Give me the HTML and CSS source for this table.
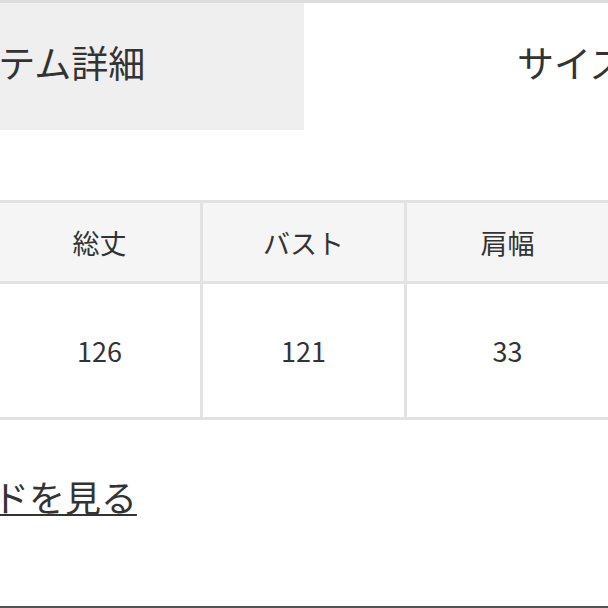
FILE: index.html
```html
<!DOCTYPE html>
<html lang="ja">
<head>
<meta charset="utf-8">
<link rel="stylesheet" href="styles.css">
</head>
<body>
<div class="page">
  <div class="tabs">
    <div class="tab tab-active">アイテム詳細</div>
    <div class="tab">サイズ</div>
  </div>
  <table class="size-table">
    <tr class="head-row">
      <th>サイズ</th>
      <th>総丈</th>
      <th>バスト</th>
      <th>肩幅</th>
    </tr>
    <tr class="body-row">
      <td>F</td>
      <td>126</td>
      <td>121</td>
      <td>33</td>
    </tr>
  </table>
  <div class="guide"><a class="guide-link" href="#">サイズガイドを見る</a></div>
  <div class="footer-line"></div>
</div>
</body>
</html>
```
FILE: styles.css
```css
html, body {
  margin: 0;
  padding: 0;
  background: #ffffff;
}
body {
  width: 608px;
  height: 608px;
  overflow: hidden;
  font-family: "Noto Sans CJK JP", "Noto Sans", sans-serif;
  color: #333333;
}
.page {
  margin-left: -232px;
  width: 1072px;
}
.tabs {
  display: flex;
  border-top: 3px solid #dddddd;
}
.tab {
  width: 536px;
  height: 127px;
  box-sizing: border-box;
  padding-bottom: 9px;
  display: flex;
  align-items: center;
  justify-content: center;
  font-size: 37px;
  color: #333333;
  background: #ffffff;
}
.tab-active {
  background: #efefef;
}
.size-table {
  margin-top: 70px;
  margin-left: 24px;
  border-collapse: separate;
  border-spacing: 0;
  border-top: 3px solid #e2e2e2;
  border-left: 3px solid #e2e2e2;
}
.size-table th,
.size-table td {
  width: 201px;
  padding: 0;
  text-align: center;
  border-right: 3px solid #e2e2e2;
  border-bottom: 3px solid #e2e2e2;
  font-size: 27px;
  font-weight: 400;
  color: #333333;
}
.head-row th {
  height: 78px;
  background: #f5f5f5;
}
.body-row td {
  height: 133px;
  background: #ffffff;
}
.guide {
  margin-top: 51px;
  margin-left: 46px;
  font-size: 36px;
  line-height: 50px;
}
.guide-link {
  color: #333333;
  text-decoration: underline;
  text-decoration-thickness: 2px;
  text-underline-offset: 2px;
}
.footer-line {
  margin-top: 85px;
  border-top: 2px solid #555555;
}
```
